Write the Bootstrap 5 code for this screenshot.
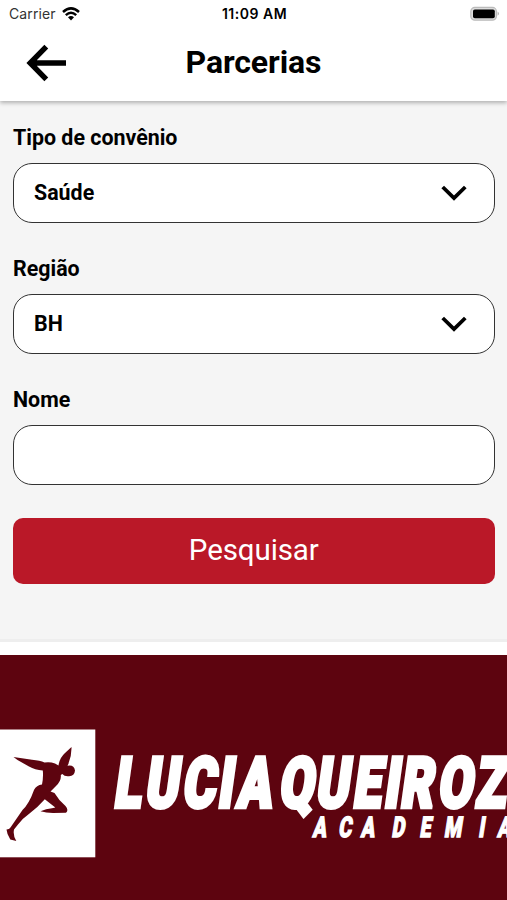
<!DOCTYPE html>
<html lang="pt-BR">
<head>
<meta charset="utf-8">
<meta name="viewport" content="width=device-width, initial-scale=1">
<title>Parcerias</title>
<link href="https://cdn.jsdelivr.net/npm/bootstrap@5.3.0/dist/css/bootstrap.min.css" rel="stylesheet">
<style>
  body { font-family: Roboto, sans-serif; color: #000; background: #f5f5f5; height: 900px; overflow: hidden; }
  .status { height: 27px; font-family: Inter, sans-serif; font-size: 14px; letter-spacing: .1px; padding: 0 7px 0 9px; }
  .status > * { flex: 1 1 0; }
  .carrier { color: #333; gap: 6px; }
  .clock { font-weight: 600; font-size: 14px; letter-spacing: .5px; white-space: nowrap; }
  .topbar { height: 101px; box-shadow: 0 2px 4px rgba(0,0,0,.28); }
  .title-row { height: 71px; }
  .title-row h1 { font-size: 32px; font-weight: 700; letter-spacing: -.1px; }
  .side { width: 92px; }
  .back-icon { margin-left: 26px; }
  .search { height: 541px; padding: 22px 12.5px 0 13px; border-bottom: 3px solid #eee; }
  .field { height: 131px; }
  .field label { font-size: 21.4px; font-weight: 700; line-height: 30px; height: 40px; display: block; }
  .field .box { height: 60px; border: 1.4px solid #333; border-radius: 19px; background: #fff; font-size: 21.4px; font-weight: 700; padding: 0 27px 0 20px; color: #000; }
  .btn-search { height: 66px; margin-top: 1.5px; background: #ba1828; border: 0; border-radius: 10px; font-size: 29.5px; color: #fff; letter-spacing: -.1px; line-height: 1; }
  .partner { margin-top: 13px; background: #5d040f; height: 245px; }
</style>
</head>
<body class="d-flex flex-column">
  <header class="topbar bg-white flex-shrink-0 position-relative">
    <div class="status d-flex align-items-center">
      <div class="carrier d-flex align-items-center">Carrier
        <svg width="18" height="14" viewBox="0 0 18 14" fill="none" stroke="#000" stroke-width="2.5"><path d="M1 5Q9-2.2 17 5M3.8 8.1Q9 3.5 14.2 8.1"/><path d="M9 13.4 6 10.3Q9 7.9 12 10.3Z" fill="#000" stroke="none"/></svg>
      </div>
      <div class="clock text-center">11:09 AM</div>
      <div class="d-flex justify-content-end">
        <svg width="31" height="16" viewBox="0 0 31 16"><rect x="1.8" y="1.4" width="25.6" height="12.8" rx="4" fill="#ddd" stroke="#bbb" stroke-width="1.2"/><rect x="4" y="3.5" width="21.8" height="8.8" rx="1.8"/><path d="M28.6 5.6Q31.2 7.7 28.6 9.8Z" fill="#aaa"/></svg>
      </div>
    </div>
    <div class="title-row d-flex align-items-center">
      <div class="side">
        <svg class="back-icon d-block" width="42" height="38" viewBox="0 0 42 38" fill="none" stroke="#000" stroke-width="5.4"><path d="M20.3 2.6 4.2 19 20.3 35.4M3.5 19H40"/></svg>
      </div>
      <h1 class="flex-grow-1 text-center m-0">Parcerias</h1>
      <div class="side"></div>
    </div>
  </header>

  <main class="search flex-shrink-0">
    <div class="field">
      <label>Tipo de convênio</label>
      <div class="box d-flex align-items-center justify-content-between"><span>Saúde</span>
        <svg width="26" height="16" viewBox="0 0 26 16" fill="none" stroke="#000" stroke-width="3.8"><path d="M1.7 2 13 13 24.3 2"/></svg>
      </div>
    </div>
    <div class="field">
      <label>Região</label>
      <div class="box d-flex align-items-center justify-content-between"><span>BH</span>
        <svg width="26" height="16" viewBox="0 0 26 16" fill="none" stroke="#000" stroke-width="3.8"><path d="M1.7 2 13 13 24.3 2"/></svg>
      </div>
    </div>
    <div class="field">
      <label for="nome">Nome</label>
      <input id="nome" type="text" class="box form-control shadow-none">
    </div>
    <button type="button" class="btn btn-search w-100 d-flex align-items-center justify-content-center">Pesquisar</button>
  </main>
  <div class="bg-white flex-shrink-0">
    <section class="partner">
      <svg class="d-block" width="507" height="245" viewBox="0 655 507 245" fill="#fff">
        <rect x="-1" y="729.5" width="96.3" height="127.8"/>
        <path fill="#5d040f" d="M13.5 757 32 759.8Q40 760.5 44.5 762.5Q50 761.5 55 763.5L58.5 765.5Q59.5 758 65 753L71.5 747Q71.8 757 67.5 765.8Q74 764.5 75 770.5Q74.5 776.5 68.5 776.2Q64.5 776.5 62.3 774L60.8 775Q61.5 781 56 786L50.5 791.5L54.5 793Q58.5 800 65.5 806Q69 810 66 812.8L53 813Q46 812.8 40.5 811.2Q46 808.5 52 808.2L55.3 807.5L44.8 799.2Q38 807 29.5 813.5Q23 818 18 824.5L14 829.5Q12.8 835.5 16.3 841L10.3 839.5Q6.8 834 6.5 829.5Q9.5 829.5 11.5 826L22.5 810Q29 804 34 790Q36.5 785 42 784.5Q43.5 777 42.8 770.5Q35 770 29 766.5L17.5 760Z"/>
        <g font-family="Roboto, sans-serif" font-weight="900" stroke="#fff">
          <text transform="translate(0 807.2) skewX(-8) scale(.72 1)" font-size="69.5" stroke-width="4.5" x="157 200 252 301 328 386 437 489 532 555 607 659" y="0">LUCIAQUEIROZ</text>
          <text transform="translate(0 836.5) skewX(-9) scale(.7 1)" font-size="28.5" stroke-width="1.3" x="446 483 515 559 599 634 683 710" y="0">ACADEMIA</text>
        </g>
      </svg>
    </section>
  </div>
<script src="https://cdn.jsdelivr.net/npm/bootstrap@5.3.0/dist/js/bootstrap.bundle.min.js"></script>
</body>
</html>
